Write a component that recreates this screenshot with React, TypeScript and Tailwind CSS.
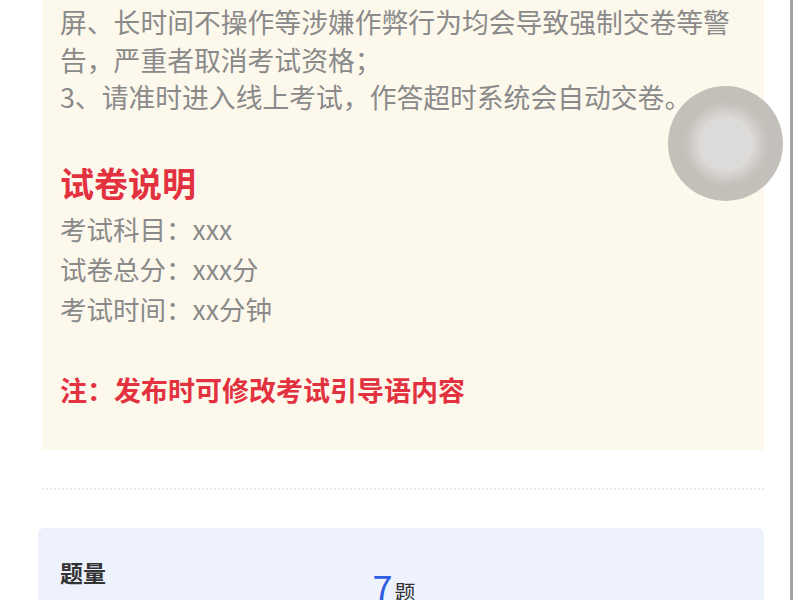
import React from 'react'

const font = { fontFamily: '"Noto Sans CJK SC", "Noto Sans", sans-serif' }

const intro = [
  '屏、长时间不操作等涉嫌作弊行为均会导致强制交卷等警',
  '告，严重者取消考试资格；',
  '3、请准时进入线上考试，作答超时系统会自动交卷。',
]

const info = ['考试科目：xxx', '试卷总分：xxx分', '考试时间：xx分钟']

export default function App() {
  return (
    <div className="relative w-[800px] h-[600px] overflow-hidden bg-white flex" style={font}>
      <div className="flex-1 flex flex-col pl-[42px] pr-[26px]">
        {/* exam guide panel */}
        <div className="bg-[#fdf8ec] px-[18px] pt-[3px] pb-[40px]">
          <div className="text-[26.8px] leading-[37.5px] text-[#8a8a8a]">
            {intro.map((line) => (
              <div key={line} className="whitespace-nowrap">{line}</div>
            ))}
          </div>
          <h2 className="mt-[47px] text-[34px] leading-[40px] font-bold text-[#e3323f]">试卷说明</h2>
          <div className="mt-[6px] text-[26.5px] leading-[40px] text-[#8a8a8a]">
            {info.map((line) => (
              <div key={line}>{line}</div>
            ))}
          </div>
          <p className="mt-[41px] text-[27px] leading-[40px] font-bold text-[#e3323f] whitespace-nowrap">
            注：发布时可修改考试引导语内容
          </p>
        </div>

        <div className="mt-[38px] border-t-2 border-dotted border-[#ececec]" />

        {/* question count card */}
        <div className="mt-[38px] -ml-[4px] bg-[#eef2fd] rounded-t-[6px] h-[80px] px-[22px] pt-[30px] flex">
          <div className="text-[23px] leading-[28px] font-bold text-[#333]">题量</div>
          <div className="flex-1 flex justify-center items-start pt-[10px] pr-[60px]">
            <span className="text-[36px] leading-[36px] text-[#2f5fe0]">7</span>
            <span className="mt-[10px] text-[21px] leading-[26px] text-[#333] ml-[2px]">题</span>
          </div>
        </div>
      </div>

      {/* right frame edge */}
      <div className="w-[10px] border-l-[3px] border-[#a3a3a3] bg-white" />

      {/* floating assist button */}
      <div className="absolute left-[668px] top-[86px] w-[115px] h-[115px] rounded-full bg-[#bdb9b4]/90 flex items-center justify-center">
        <div className="w-[56px] h-[56px] rounded-full bg-[#dddbd9] shadow-[0_0_10px_8px_rgba(221,219,217,0.8)]" />
      </div>
    </div>
  )
}
